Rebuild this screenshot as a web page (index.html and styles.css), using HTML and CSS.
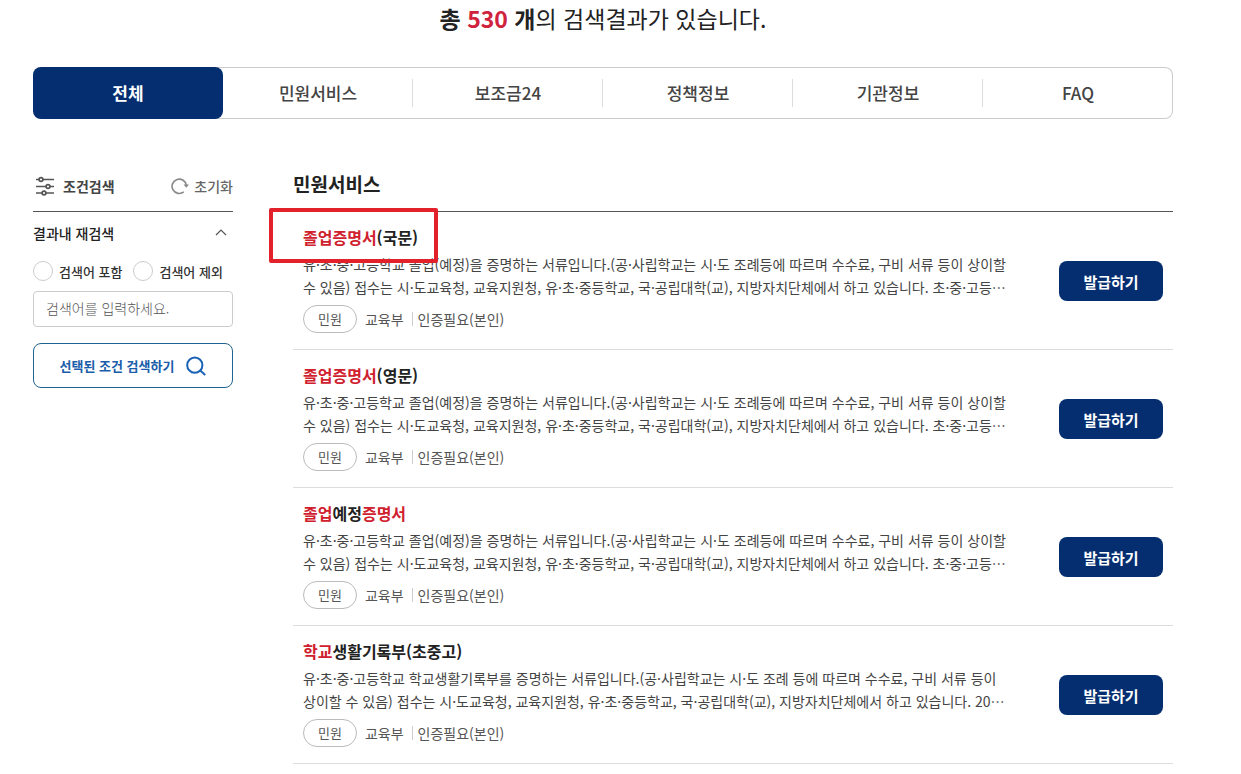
FILE: index.html
```html
<!DOCTYPE html>
<html lang="ko">
<head>
<meta charset="utf-8">
<meta name="viewport" content="width=device-width, initial-scale=1">
<title>검색결과</title>
<link rel="stylesheet" href="styles.css">
</head>
<body>
<div class="page">
  <h1 class="summary"><strong>총 <em>530</em> 개</strong>의 검색결과가 있습니다.</h1>

  <nav class="tabs">
    <a class="tab active" href="#all">전체</a>
    <a class="tab" href="#service">민원서비스</a>
    <a class="tab" href="#subsidy">보조금24</a>
    <a class="tab" href="#policy">정책정보</a>
    <a class="tab" href="#agency">기관정보</a>
    <a class="tab" href="#faq">FAQ</a>
  </nav>

  <div class="columns">
    <form class="filter">
      <div class="filter-head">
        <h2 class="filter-title">
          <svg width="20" height="20" viewBox="0 0 20 20" fill="none" stroke="#555" stroke-width="1.7"><path d="M1 3.5h3M8 3.5h11M1 10.5h10M15 10.5h4M1 17h6M11 17h8"/><circle cx="6" cy="3.5" r="1.9"/><circle cx="13" cy="10.5" r="1.9"/><circle cx="9" cy="17" r="1.9"/></svg>
          조건검색
        </h2>
        <button class="reset" type="reset">
          <svg width="18" height="18" viewBox="0 0 18 18" fill="none" stroke="#888" stroke-width="1.6"><path d="M12.8 14.9A7.2 7.2 0 1 1 15.4 8.5"/><path d="M12.6 7.4h5.4l-2.7 3.4z" fill="#888" stroke="none"/></svg>
          초기화
        </button>
      </div>
      <button class="section-toggle" type="button" aria-expanded="true">
        결과내 재검색
        <svg width="12" height="8" viewBox="0 0 12 8" fill="none" stroke="#555" stroke-width="1.2"><path d="M1 6l5-5 5 5"/></svg>
      </button>
      <div class="radios">
        <label class="radio"><input type="radio" name="mode">검색어 포함</label>
        <label class="radio"><input type="radio" name="mode">검색어 제외</label>
      </div>
      <input class="keyword" type="text" aria-label="검색어" placeholder="검색어를 입력하세요.">
      <button class="search" type="button">
        선택된 조건 검색하기
        <svg width="20" height="20" viewBox="0 0 20 20" fill="none" stroke="#1a62b3" stroke-width="2"><circle cx="8.8" cy="9.2" r="7.6"/><path d="M14.2 14.6l5 4.4"/></svg>
      </button>
    </form>

    <main class="results">
      <h2 class="results-title">민원서비스</h2>
      <ul class="list">
        <li class="item">
          <div class="body">
            <h3 class="name"><a href="#r1"><mark>졸업증명서</mark>(국문)</a></h3>
            <p class="desc">유·초·중·고등학교 졸업(예정)을 증명하는 서류입니다.(공·사립학교는 시·도 조례등에 따르며 수수료, 구비 서류 등이 상이할<br>수 있음) 접수는 시·도교육청, 교육지원청, 유·초·중등학교, 국·공립대학(교), 지방자치단체에서 하고 있습니다. 초·중·고등…</p>
            <div class="meta"><span class="badge">민원</span><span>교육부</span><span class="auth">인증필요(본인)</span></div>
          </div>
          <button class="issue" type="button">발급하기</button>
          <span class="callout"></span>
        </li>
        <li class="item">
          <div class="body">
            <h3 class="name"><a href="#r2"><mark>졸업증명서</mark>(영문)</a></h3>
            <p class="desc">유·초·중·고등학교 졸업(예정)을 증명하는 서류입니다.(공·사립학교는 시·도 조례등에 따르며 수수료, 구비 서류 등이 상이할<br>수 있음) 접수는 시·도교육청, 교육지원청, 유·초·중등학교, 국·공립대학(교), 지방자치단체에서 하고 있습니다. 초·중·고등…</p>
            <div class="meta"><span class="badge">민원</span><span>교육부</span><span class="auth">인증필요(본인)</span></div>
          </div>
          <button class="issue" type="button">발급하기</button>
        </li>
        <li class="item">
          <div class="body">
            <h3 class="name"><a href="#r3"><mark>졸업</mark>예정<mark>증명서</mark></a></h3>
            <p class="desc">유·초·중·고등학교 졸업(예정)을 증명하는 서류입니다.(공·사립학교는 시·도 조례등에 따르며 수수료, 구비 서류 등이 상이할<br>수 있음) 접수는 시·도교육청, 교육지원청, 유·초·중등학교, 국·공립대학(교), 지방자치단체에서 하고 있습니다. 초·중·고등…</p>
            <div class="meta"><span class="badge">민원</span><span>교육부</span><span class="auth">인증필요(본인)</span></div>
          </div>
          <button class="issue" type="button">발급하기</button>
        </li>
        <li class="item">
          <div class="body">
            <h3 class="name"><a href="#r4"><mark>학교</mark>생활기록부(초중고)</a></h3>
            <p class="desc">유·초·중·고등학교 학교생활기록부를 증명하는 서류입니다.(공·사립학교는 시·도 조례 등에 따르며 수수료, 구비 서류 등이<br>상이할 수 있음) 접수는 시·도교육청, 교육지원청, 유·초·중등학교, 국·공립대학(교), 지방자치단체에서 하고 있습니다. 20…</p>
            <div class="meta"><span class="badge">민원</span><span>교육부</span><span class="auth">인증필요(본인)</span></div>
          </div>
          <button class="issue" type="button">발급하기</button>
        </li>
      </ul>
    </main>
  </div>
</div>
</body>
</html>
```
FILE: styles.css
```css
* { box-sizing: border-box; }
body, h1, h2, h3, p, ul { margin: 0; padding: 0; }
body {
  background: #fff;
  color: #222;
  font-family: "Noto Sans CJK KR", "Noto Sans", sans-serif;
  font-size: 14px;
}
button, input { font: inherit; color: inherit; }
button { padding: 0; border: 0; background: none; cursor: pointer; }
a { color: inherit; text-decoration: none; }
mark { background: none; color: #d0202e; }
svg { flex: none; }

.page { padding: 0 68px 8px 33px; }

.summary {
  padding: 1px 0 32px;
  font-size: 23px;
  font-weight: 400;
  line-height: 34px;
  text-align: center;
}
.summary em { color: #d0213d; font-style: normal; }

.tabs {
  display: flex;
  height: 52px;
  border-radius: 8px;
  box-shadow: inset 0 0 0 1px #ccc;
}
.tab {
  display: flex;
  flex: 1;
  align-items: center;
  justify-content: center;
  padding-bottom: 2px;
  color: #444;
  font-size: 17px;
  font-weight: 500;
}
.tab + .tab {
  background: linear-gradient(#ddd, #ddd) right center / 1px 28px no-repeat;
}
.tabs .tab:last-child { background: none; }
.tab.active {
  border-radius: 8px;
  background: #042e70;
  color: #fff;
  font-weight: 700;
}

.columns {
  display: grid;
  grid-template-columns: 200px minmax(0, 1fr);
  column-gap: 60px;
  padding-top: 42px;
}

.filter-head {
  display: flex;
  align-items: center;
  justify-content: space-between;
  height: 51px;
  border-bottom: 1px solid #555;
}
.filter-title, .reset { display: flex; align-items: center; }
.filter-title {
  gap: 8px;
  padding-left: 2px;
  color: #444;
  font-size: 14px;
}
.reset { gap: 5px; color: #666; font-weight: 500; }

.section-toggle {
  display: flex;
  align-items: center;
  justify-content: space-between;
  width: 100%;
  height: 44px;
  padding: 0 6px 2px 0;
  font-weight: 500;
}
.radios { display: flex; height: 30px; gap: 11px; }
.radio {
  display: flex;
  align-items: center;
  gap: 6px;
  color: #333;
  font-size: 13px;
  font-weight: 500;
}
.radio input {
  width: 20px;
  height: 20px;
  margin: 0;
  border: 1px solid #ccc;
  border-radius: 50%;
  appearance: none;
}
.radio input:checked { border: 6px solid #042e70; }
.keyword {
  display: block;
  width: 100%;
  height: 36px;
  margin: 5px 0 16px;
  padding: 0 12px 2px;
  border: 1px solid #ccc;
  border-radius: 4px;
  font-weight: 300;
}
.keyword::placeholder { color: #555; }
.search {
  display: flex;
  align-items: center;
  justify-content: center;
  gap: 12px;
  width: 100%;
  height: 45px;
  border: 1px solid #1f6391;
  border-radius: 8px;
  color: #1a5dab;
  font-size: 13px;
  font-weight: 700;
}

.results-title {
  height: 51px;
  border-bottom: 1px solid #555;
  font-size: 19px;
  line-height: 46px;
}
.list { list-style: none; }
.item {
  position: relative;
  display: flex;
  align-items: center;
  gap: 16px;
  padding: 13px 10px 16px;
  border-bottom: 1px solid #ddd;
}
.body { flex: 1; min-width: 0; }
.name { font-size: 16px; line-height: 24px; }
.desc {
  margin: 4px 0 6px;
  color: #444;
  font-size: 14px;
  line-height: 23px;
}
.meta { display: flex; align-items: center; gap: 8px; color: #555; }
.badge {
  padding: 0 14px;
  border: 1px solid #bbb;
  border-radius: 14px;
  font-size: 13px;
  line-height: 26px;
}
.auth {
  padding-left: 6px;
  background: linear-gradient(#ccc, #ccc) left center / 1px 14px no-repeat;
}
.issue {
  flex: none;
  width: 104px;
  height: 40px;
  margin-top: 4px;
  border-radius: 8px;
  background: #042e70;
  color: #fff;
  font-size: 15px;
  font-weight: 700;
}
.callout {
  position: absolute;
  top: -4px;
  left: -24px;
  width: 169px;
  height: 55px;
  border: 4px solid #e3212b;
  border-radius: 2px;
  pointer-events: none;
}
```
